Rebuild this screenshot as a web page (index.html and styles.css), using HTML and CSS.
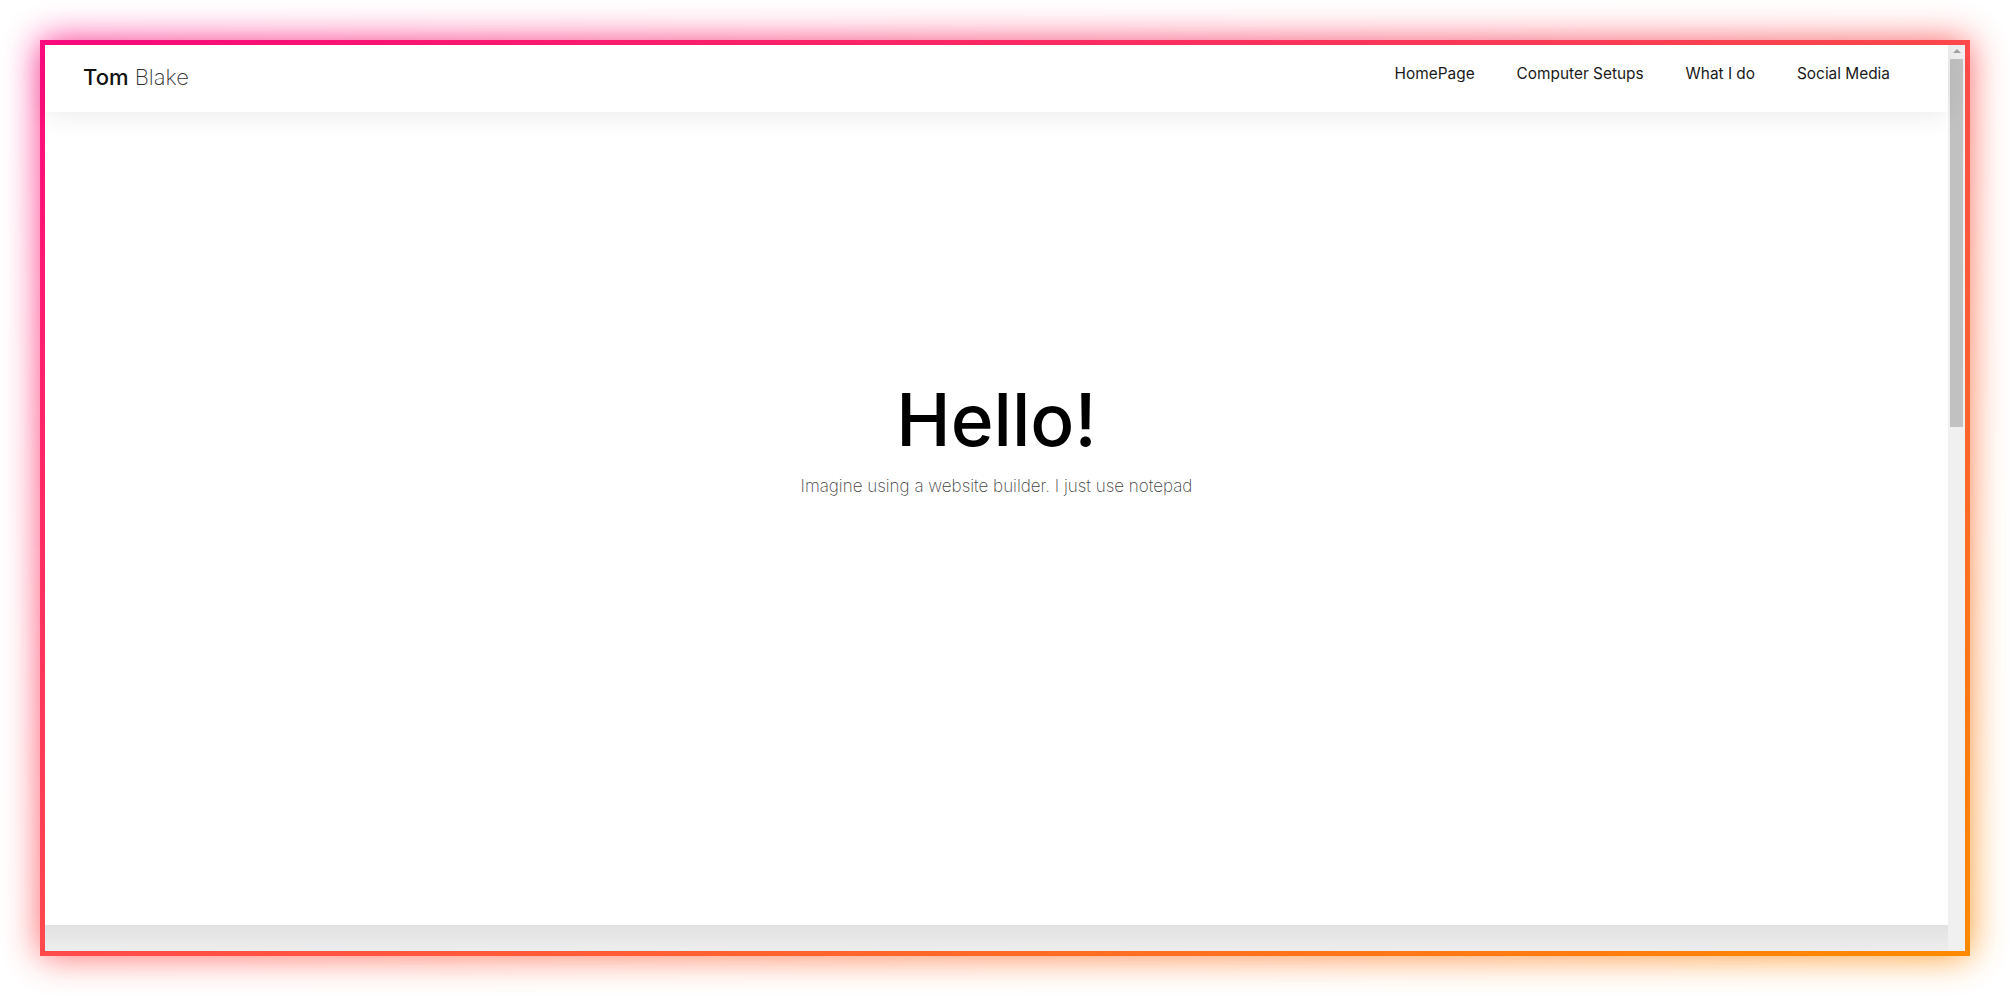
FILE: index.html
```html
<!DOCTYPE html>
<html lang="en">
<head>
<meta charset="utf-8">
<title>Tom Blake</title>
<link rel="stylesheet" href="styles.css">
</head>
<body>
<div class="stage">
  <div class="frame">
    <div class="window">
      <div class="viewport">
        <header class="header">
          <div class="logo"><span class="logo-first">Tom</span> <span class="logo-last">Blake</span></div>
          <nav class="nav">
            <a class="nav-link" href="#">HomePage</a>
            <a class="nav-link" href="#">Computer Setups</a>
            <a class="nav-link" href="#">What I do</a>
            <a class="nav-link" href="#">Social Media</a>
          </nav>
        </header>
        <main class="hero">
          <h1 class="hero-title">Hello!</h1>
          <p class="hero-sub">Imagine using a website builder. I just use notepad</p>
        </main>
        <div class="bottom-band"></div>
      </div>
      <div class="scrollbar">
        <div class="sb-up"></div>
        <div class="sb-thumb"></div>
      </div>
    </div>
  </div>
</div>
</body>
</html>
```

FILE: styles.css
```css
html {
  margin: 0;
  padding: 0;
  background: #ffffff;
  overflow: hidden;
}

body {
  margin: 0;
  padding: 0;
  font-family: "Inter", "Liberation Sans", sans-serif;
  width: 2010px;
  height: 996px;
}

.stage {
  position: relative;
  z-index: 0;
  padding: 40px;
  box-sizing: border-box;
  width: 2010px;
  height: 996px;
}

.frame {
  position: relative;
  box-sizing: border-box;
  width: 1930px;
  height: 916px;
  padding: 5px;
  background: linear-gradient(to bottom right, #ff0a80 0%, #ff4a4c 50%, #ff8a00 100%);
}

.frame::before {
  content: "";
  position: absolute;
  inset: 0;
  z-index: -1;
  background: linear-gradient(to bottom right, #ff0a80 0%, #ff4a4c 50%, #ff8a00 100%);
  filter: blur(18px);
  opacity: 0.85;
}

.window {
  display: flex;
  width: 100%;
  height: 100%;
  background: #f0f0f0;
}

.viewport {
  flex: 1;
  display: flex;
  flex-direction: column;
  min-width: 0;
}

.header {
  position: relative;
  z-index: 1;
  height: 67px;
  box-sizing: border-box;
  display: flex;
  align-items: flex-start;
  justify-content: space-between;
  padding: 21px 58px 0 38px;
  background: #ffffff;
  box-shadow: 0 4px 26px rgba(0, 0, 0, 0.08);
}

.logo {
  font-size: 22px;
  line-height: 1;
  white-space: nowrap;
}

.logo-first {
  font-weight: 500;
  color: #111111;
}

.logo-last {
  font-weight: 200;
  color: #333333;
}

.nav {
  display: flex;
  gap: 42px;
}

.nav-link {
  font-size: 15.4px;
  line-height: 1;
  font-weight: 400;
  color: #1a1a1a;
  text-decoration: none;
  white-space: nowrap;
}

.hero {
  flex: 1;
  display: flex;
  flex-direction: column;
  align-items: center;
  padding-top: 271px;
  background: #ffffff;
}

.hero-title {
  margin: 0;
  font-size: 73px;
  line-height: 1;
  font-weight: 500;
  color: #000000;
}

.hero-sub {
  margin: 22px 0 0;
  font-size: 17px;
  line-height: 1;
  font-weight: 200;
  color: #444444;
}

.bottom-band {
  height: 26px;
  background: linear-gradient(to bottom, #e2e2e2, #ededed);
}

.scrollbar {
  width: 17px;
  display: flex;
  flex-direction: column;
  align-items: center;
  padding-top: 4px;
  background: #f0f0f0;
}

.sb-up {
  width: 0;
  height: 0;
  border-left: 4px solid transparent;
  border-right: 4px solid transparent;
  border-bottom: 4px solid #a3a3a3;
}

.sb-thumb {
  margin-top: 6px;
  width: 13px;
  height: 368px;
  background: #c1c1c1;
}
```
